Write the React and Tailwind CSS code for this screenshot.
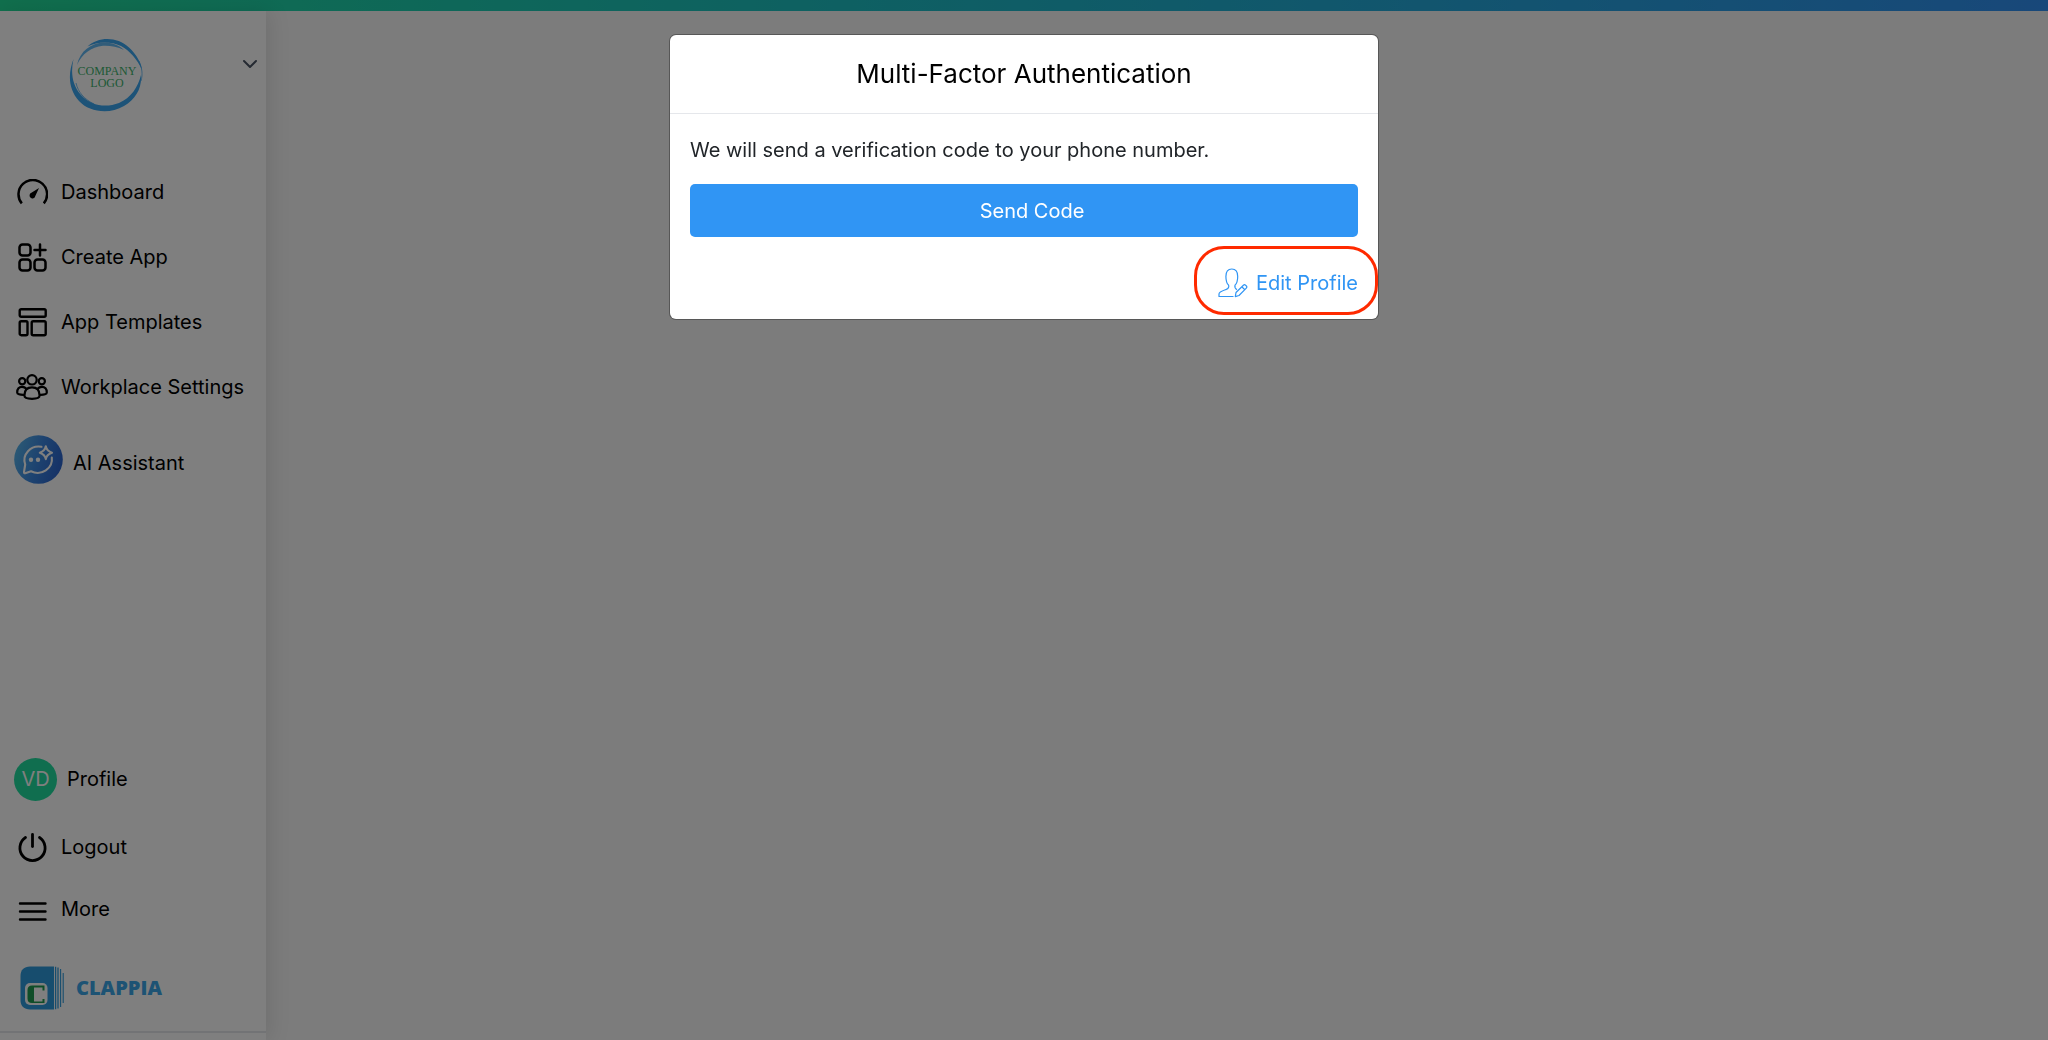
import { useState } from "react";

function DashboardIcon() {
  return (
    <svg viewBox="0 0 32 26" className="h-[26px] w-8" fill="none" stroke="currentColor" strokeWidth="2.5" strokeLinecap="butt">
      <path d="M5.800 24.400A14.300 14.300 0 1 1 27.800 24.400" />
      <path d="M23 9L19.300 17A2.900 2.900 0 1 1 15.400 13.800Z" fill="currentColor" stroke="none" />
    </svg>
  );
}

function CreateAppIcon() {
  return (
    <svg viewBox="0 0 32 32" className="size-8" fill="none" stroke="currentColor" strokeWidth="2.5" strokeLinecap="round">
      <rect x="3.500" y="3.500" width="11" height="11" rx="3" />
      <rect x="3.500" y="18.500" width="11" height="11" rx="3" />
      <rect x="18.500" y="18.500" width="11" height="11" rx="3" />
      <path d="M24 3.500V14.500M18.500 9H29.500" />
    </svg>
  );
}

function TemplatesIcon() {
  return (
    <svg viewBox="0 0 32 32" className="size-8" fill="none" stroke="currentColor" strokeWidth="2.4">
      <rect x="3.700" y="3.200" width="26" height="7.600" rx="1.500" />
      <rect x="3.700" y="15.200" width="7.800" height="14" rx="1.500" />
      <rect x="15.700" y="15.200" width="14" height="14" rx="1.500" />
    </svg>
  );
}

function WorkplaceIcon() {
  return (
    <svg viewBox="0 0 32 26" className="h-[26px] w-8" fill="none" stroke="currentColor" strokeWidth="2.2" strokeLinejoin="round">
      <circle cx="16" cy="5.800" r="4.700" />
      <circle cx="6.200" cy="7.200" r="3.100" />
      <circle cx="25.800" cy="7.200" r="3.100" />
      <path d="M8.400 21.500C8.400 16 11.400 13.300 16 13.300S23.600 16 23.600 21.500C23.600 23.600 21 24.800 16 24.800S8.400 23.600 8.400 21.500Z" />
      <path d="M8.400 20.800C3.600 21 1.200 20 1.200 18.400C1.200 14.800 3 12.800 6 12.800C7.800 12.800 9.200 13.400 10.400 14.800" />
      <path d="M23.600 20.800C28.400 21 30.800 20 30.800 18.400C30.800 14.800 29 12.800 26 12.800C24.200 12.800 22.800 13.400 21.600 14.800" />
    </svg>
  );
}

function AssistantIcon() {
  return (
    <svg viewBox="0 0 49 49" className="size-[49px]" fill="none">
      <defs>
        <linearGradient id="assistant-bg" x1="0" y1="0.3" x2="1" y2="0.6">
          <stop offset="0" stopColor="#58b4ea" />
          <stop offset="0.5" stopColor="#3b86e0" />
          <stop offset="1" stopColor="#2a62cc" />
        </linearGradient>
      </defs>
      <circle cx="24.5" cy="24.5" r="24.3" fill="url(#assistant-bg)" />
      <g stroke="#fff" strokeWidth="2.1" strokeLinecap="round" strokeLinejoin="round">
        <path d="M27.500 11.800A14.300 13.600 0 0 0 11.200 29.500L10 37C9.900 38 10.300 38.400 11.200 38.200L17 36.300A14.300 13.600 0 0 0 37.800 22.500" />
        <path d="M31.800 11.200C32.300 14.600 33.800 16.300 38 17.700C33.800 19 32.300 20.900 31.800 24.200C31.300 20.900 29.800 19 25.800 17.700C29.800 16.300 31.300 14.600 31.800 11.200Z" />
      </g>
      <circle cx="17" cy="24.800" r="2.200" fill="#fff" />
      <circle cx="24" cy="24.800" r="2.200" fill="#fff" />
    </svg>
  );
}

function PowerIcon() {
  return (
    <svg viewBox="0 0 32 32" className="size-8" fill="none" stroke="currentColor" strokeWidth="2.8" strokeLinecap="round">
      <path d="M16.500 3.500V15.500" />
      <path d="M9.500 6.500A12.600 12.600 0 1 0 23.500 6.500" />
    </svg>
  );
}

function MoreIcon() {
  return (
    <svg viewBox="0 0 32 32" className="size-8" fill="none" stroke="currentColor" strokeWidth="2.4" strokeLinecap="round">
      <path d="M4 8.500H29.500M4 16.500H29.500M4 24.500H29.500" />
    </svg>
  );
}

function EditProfileIcon() {
  return (
    <svg viewBox="0 0 30 30" className="size-[30px]" fill="none" stroke="currentColor" strokeWidth="1.2" strokeLinejoin="round">
      <path d="M15.500 28.500H1V26C1 23.600 4 22.800 8.200 21.400C10.400 20.600 11.200 18.800 10.600 17.200C8.600 15.200 7.900 12 7.900 8.400C7.900 3.600 10.200 1 13.800 1S19.700 3.600 19.700 8.400C19.700 12 19 15.200 17 17.200C16.500 19.400 17.300 20.800 19 21.600" />
      <path d="M17.300 28.600L18 24.500L25.400 17.200C26.200 16.500 27 16.600 27.700 17.300L28.400 18C29 18.700 29 19.400 28.300 20.100L21 27.500L17.300 28.600ZM23.800 18.800L26.800 21.700" />
    </svg>
  );
}

function CompanyLogo() {
  return (
    <svg viewBox="0 0 74 76" className="h-[76px] w-[74px]" role="img" aria-label="Company logo">
      <g fill="#3ba6f0">
        <path d="M18.500 9.500C29 -0.500 48 -1 60 10.500C68 18 72 26 73 33C68 22 61 14 52 9C41 4 29 4.500 18.500 9.500Z" />
        <path d="M4.500 22C-1 36 -1 52 10 64C20 75 40 78 55 69C67 62 73 51 72 38C69 50 62 61 50 66C37 71 22 69 12 58C3 48 1.500 35 4.500 22Z" />
        <path d="M8 28C11 14 22 6 35 5.500C43 5.500 50 8 55 13C48 9.500 41 8.500 34 8.800C22 10 13 17 8 28Z" opacity="0.8" />
      </g>
      <path d="M7 46C9 55 15 62 25 67M70 24C73 31 74 37 72 44" stroke="#3ba6f0" strokeWidth="0.7" fill="none" />
      <g fill="#3cb26c" fontFamily="'Liberation Serif', serif" fontSize="12" textAnchor="middle">
        <text x="38" y="38">COMPANY</text>
        <text x="38" y="50">LOGO</text>
      </g>
    </svg>
  );
}

function ClappiaLogo() {
  return (
    <svg viewBox="0 0 44 44" className="size-11" role="img" aria-label="Clappia">
      <path d="M10 0.500H34V43.500H10C4 43.500 0.500 40 0.500 34V10C0.500 4 4 0.500 10 0.500Z" fill="#2f9bdc" />
      <path d="M35.600 0.700V43.300M38 1.500V42.500" stroke="#2f9bdc" strokeWidth="1.300" />
      <path d="M40.600 3V41M43.200 7V37" stroke="#2f9bdc" strokeWidth="1.100" />
      <rect x="5" y="17" width="22.500" height="22" rx="5" fill="#fff" />
      <path d="M24.500 19.500V24.500H22.500V21.500H14V35.500H22.500V33H24.500V37H12C9 37 7.500 35.500 7.500 32.500V24C7.500 21 9 19.500 12 19.500Z" fill="#1f9a50" />
    </svg>
  );
}

const mainLinks = [
  { label: "Dashboard", Icon: DashboardIcon },
  { label: "Create App", Icon: CreateAppIcon },
  { label: "App Templates", Icon: TemplatesIcon },
  { label: "Workplace Settings", Icon: WorkplaceIcon },
];

function Sidebar() {
  return (
    <aside className="flex w-[266px] shrink-0 flex-col bg-white shadow-[4px_0_20px_rgba(0,0,0,0.1)]">
      <div className="flex items-start justify-between pt-[26px] pr-1 pl-[69px]">
        <CompanyLogo />
        <button type="button" aria-label="Switch workplace" className="mt-[15px] p-1 text-gray-600">
          <svg viewBox="0 0 16 16" className="size-4" fill="none" stroke="currentColor" strokeWidth="2" strokeLinecap="round" strokeLinejoin="round">
            <path d="M2 5L8 11L14 5" />
          </svg>
        </button>
      </div>

      <nav className="mt-[46px] flex flex-1 flex-col">
        {mainLinks.map(({ label, Icon }) => (
          <a key={label} href="#" className="flex h-[65px] items-center gap-[13px] pl-4">
            <Icon />
            {label}
          </a>
        ))}
        <a href="#" className="flex h-20 items-center gap-2.5 pl-3.5">
          <AssistantIcon />
          <span className="pt-2">AI Assistant</span>
        </a>
      </nav>

      <div className="flex flex-col">
        <a href="#" className="flex h-[70px] items-center gap-2.5 pl-3.5">
          <span className="flex size-[43px] items-center justify-center rounded-full bg-[#20dc9e] text-white">VD</span>
          Profile
        </a>
        <a href="#" className="flex h-[66px] items-center gap-[13px] pl-4">
          <PowerIcon />
          Logout
        </a>
        <a href="#" className="flex h-[62px] items-center gap-[13px] pl-4">
          <MoreIcon />
          <span className="pb-1">More</span>
        </a>
        <a href="#" className="mt-6 mb-[21px] flex items-center gap-3 pl-5 font-['Open_Sans',sans-serif] text-xl font-extrabold text-[#3ba6e8]">
          <ClappiaLogo />
          CLAPPIA
        </a>
        <div className="h-[9px] border-t-2 border-gray-200" />
      </div>
    </aside>
  );
}

function MfaDialog({ onSend }) {
  return (
    <div className="fixed inset-0 z-10 flex items-start justify-center bg-black/50 pt-[35px]">
      <section
        role="dialog"
        aria-modal="true"
        aria-labelledby="mfa-title"
        className="w-full max-w-[708px] rounded-md bg-white ring-1 ring-black/30"
      >
        <header className="border-b border-gray-200 pt-5 pb-5">
          <h1 id="mfa-title" className="text-center text-[26px] leading-[38px] text-black">
            Multi-Factor Authentication
          </h1>
        </header>
        <div className="px-5 pt-5">
          <p className="leading-8 text-[#212529]">We will send a verification code to your phone number.</p>
          <button type="button" onClick={onSend} className="mt-[18px] h-[53px] w-full rounded-[5px] bg-[#3095f4] pl-4 text-white">
            Send Code
          </button>
        </div>
        <div className="flex justify-end pt-[9px] pb-1">
          <a
            href="#"
            className="flex h-[69px] items-center gap-2 rounded-[30px] border-[3px] border-[#ff2a00] pt-1 pr-[17px] pl-[21px] text-[#3095f4]"
          >
            <EditProfileIcon />
            Edit Profile
          </a>
        </div>
      </section>
    </div>
  );
}

export default function App() {
  const [sent, setSent] = useState(false);

  return (
    <div className="flex min-h-dvh flex-col bg-[#f8f8f8] font-['Inter',sans-serif] text-xl text-black">
      <div className="h-[11px] bg-linear-to-r from-[#22de9a] to-[#3190f4]" />
      <div className="flex flex-1">
        <Sidebar />
        <main className="flex-1" />
      </div>
      {!sent && <MfaDialog onSend={() => setSent(true)} />}
    </div>
  );
}
